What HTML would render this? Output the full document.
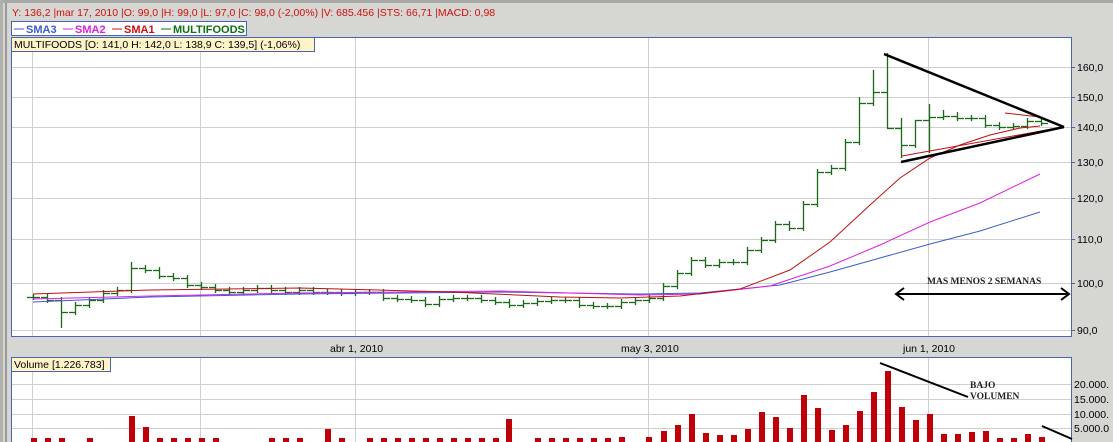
<!DOCTYPE html>
<html><head><meta charset="utf-8"><style>
html,body{margin:0;padding:0;background:#d4d4d0;width:1113px;height:442px;overflow:hidden}
svg{display:block}
text{font-family:"Liberation Sans",sans-serif}
</style></head><body>
<svg id="s" width="1113" height="442" xmlns="http://www.w3.org/2000/svg">
<rect x="0" y="0" width="1113" height="442" fill="#d6d6d2"/>
<rect x="0" y="0" width="1113" height="3" fill="#a8a8a4"/>
<rect x="0" y="0" width="3" height="442" fill="#b0b0ac"/>
<rect x="5" y="3" width="2" height="439" fill="#9a9a96"/>
<text x="12" y="16" font-size="10.5" fill="#d01010">Y: 136,2 |mar 17, 2010 |O: 99,0 |H: 99,0 |L: 97,0 |C: 98,0 (-2,00%) |V: 685.456 |STS: 66,71 |MACD: 0,98</text>
<rect x="11.5" y="37.5" width="1060" height="299" fill="#fff" stroke="#4a64b4"/>
<rect x="11.5" y="357.5" width="1060" height="90" fill="#fff" stroke="#4a64b4"/>
<g id="grid" stroke="#cfcfcf" stroke-width="1"></g>
<g id="ser"></g>
<rect x="11.5" y="21.5" width="235" height="14" fill="#fff" stroke="#4a64b4"/>
<g font-size="11" font-weight="bold">
<line x1="14" y1="29" x2="24" y2="29" stroke="#3a5ed0"/><text x="26" y="33" fill="#3a5ed0">SMA3</text>
<line x1="63" y1="29" x2="73" y2="29" stroke="#e020e0"/><text x="75" y="33" fill="#e020e0">SMA2</text>
<line x1="112" y1="29" x2="122" y2="29" stroke="#d01010"/><text x="124" y="33" fill="#d01010">SMA1</text>
<line x1="161" y1="29" x2="171" y2="29" stroke="#107010"/><text x="173" y="33" fill="#107010">MULTIFOODS</text>
</g>
<rect x="11.5" y="37.5" width="303" height="14" fill="#fff3c8" stroke="#4a64b4"/>
<text x="14" y="48" font-size="10.5" fill="#000">MULTIFOODS [O: 141,0  H: 142,0  L: 138,9  C: 139,5] (-1,06%)</text>
<rect x="11.5" y="357.5" width="99" height="14" fill="#fff3c8" stroke="#4a64b4"/>
<text x="14" y="368" font-size="10.5" fill="#000">Volume [1.226.783]</text>
<g font-size="10.5" fill="#000" id="ax"></g>
<g font-size="10.5" fill="#000">
<text x="330" y="352">abr 1, 2010</text>
<text x="621" y="352">may 3, 2010</text>
<text x="903" y="352">jun 1, 2010</text>
</g>
<g stroke="#000" stroke-width="2.5" fill="none">
<line x1="884" y1="54" x2="1064" y2="127"/>
<line x1="901" y1="162" x2="1064" y2="127"/>
<line x1="896" y1="294" x2="1069" y2="294" stroke-width="2"/>
<polyline points="904,288 896,294 904,300" stroke-width="2"/>
<polyline points="1061,288 1069,294 1061,300" stroke-width="2"/>
<line x1="880" y1="363" x2="968" y2="397" stroke-width="2"/>
<line x1="1042" y1="426" x2="1072" y2="439" stroke-width="2"/>
</g>
<text x="927" y="284" style="font-family:'Liberation Serif',serif" font-size="9.5" font-weight="bold" fill="#222">MAS MENOS 2 SEMANAS</text>
<text x="970" y="388" style="font-family:'Liberation Serif',serif" font-size="9.5" font-weight="bold" fill="#222">BAJO</text>
<text x="970" y="399" style="font-family:'Liberation Serif',serif" font-size="9.5" font-weight="bold" fill="#222">VOLUMEN</text>
</svg>
<script>
var NS="http://www.w3.org/2000/svg";
function el(p,t,a){var e=document.createElementNS(NS,t);for(var k in a)e.setAttribute(k,a[k]);p.appendChild(e);return e;}
var grid=document.getElementById('grid'),ser=document.getElementById('ser'),ax=document.getElementById('ax');
var ly=[[67,'160,0'],[97,'150,0'],[127,'140,0'],[162,'130,0'],[198,'120,0'],[239,'110,0'],[283,'100,0'],[330,'90,0']];
ly.forEach(function(l){el(grid,'line',{x1:12,y1:l[0]+.5,x2:1071,y2:l[0]+.5});
 el(ax,'line',{x1:1072,y1:l[0]+.5,x2:1075,y2:l[0]+.5,stroke:'#4a64b4'});
 var t=el(ax,'text',{x:1077,y:l[0]+4});t.textContent=l[1];});
[384,399,414,428].forEach(function(y,i){el(grid,'line',{x1:12,y1:y+.5,x2:1071,y2:y+.5});
 var t=el(ax,'text',{x:1074,y:y+4});t.textContent=['20.000.','15.000.','10.000.','5.000.0'][i];});
[32,200,355,648,928].forEach(function(x){el(grid,'line',{x1:x+.5,y1:38,x2:x+.5,y2:336});el(grid,'line',{x1:x+.5,y1:358,x2:x+.5,y2:442});});
var c=[297,300,312,305,300,293,290,268,270,276,278,285,287,290,292,290,288,290,292,290,292,292,293,292,292,298,299,300,304,299,298,298,300,302,305,303,301,300,300,305,306,306,302,300,298,286,273,260,265,262,262,250,240,224,228,204,172,168,142,103,92,128,145,120,117,116,118,118,125,127,126,121,123,127];
var hi={7:262,59:97,60:70,61:53,62:118,65:110,63:120,64:104,66:112};
var lo={2:328,61:128,62:158,64:153};
for(var i=0;i<c.length-1;i++){var x=33+i*14;if(x>1045)break;var o=i?c[i-1]:c[0],cl=c[i];
 var h=hi[i]||Math.min(o,cl)-3,l=lo[i]||Math.max(o,cl)+3;
 el(ser,'line',{x1:x+.5,y1:h,x2:x+.5,y2:l,stroke:'#1a6a1a','stroke-width':1.3});
 el(ser,'line',{x1:x-6,y1:o+.5,x2:x,y2:o+.5,stroke:'#1a6a1a','stroke-width':1.3});
 el(ser,'line',{x1:x,y1:cl+.5,x2:x+7,y2:cl+.5,stroke:'#1a6a1a','stroke-width':1.3});}
el(ser,'polyline',{fill:'none',stroke:'#3a5ed0','stroke-width':1,points:'33,302 150,297 300,294 500,292 640,294 700,293 780,285 830,272 880,258 930,244 980,231 1040,212'});
el(ser,'polyline',{fill:'none',stroke:'#e020e0','stroke-width':1,points:'33,299 150,296 300,293 500,291 640,295 700,294 770,286 830,266 880,245 930,222 980,203 1040,174'});
el(ser,'polyline',{fill:'none',stroke:'#c01010','stroke-width':1,points:'33,294 150,290 300,288 450,292 560,297 620,298 680,296 740,289 790,270 830,242 870,205 900,178 930,158 960,145 990,135 1020,128 1040,126'});
el(ser,'polyline',{fill:'none',stroke:'#c01010','stroke-width':1,points:'902,156 1063,127 1040,117 1005,113'});
var vb=[[33,4],[47,4],[61,4],[89,4],[131,26],[145,15],[159,4],[173,4],[187,4],[201,4],[215,4],[271,4],[285,4],[299,4],[327,13],[341,4],[369,4],[383,4],[397,4],[411,4],[425,4],[439,4],[453,4],[467,4],[481,4],[495,4],[508,23],[537,4],[551,4],[565,4],[579,4],[593,4],[607,4],[621,5],[648,5],[663,11],[677,17],[691,28],[705,9],[719,7],[733,7],[747,13],[761,30],[775,25],[789,14],[803,47],[817,34],[831,12],[845,17],[859,31],[873,50],[887,71],[901,35],[915,22],[929,28],[943,8],[957,8],[971,10],[985,11],[999,4],[1013,4],[1027,8],[1041,5]];
vb.forEach(function(b){el(ser,'rect',{x:b[0]-2,y:442-b[1],width:6,height:b[1],fill:'#c00008'});});
</script>
</body></html>
